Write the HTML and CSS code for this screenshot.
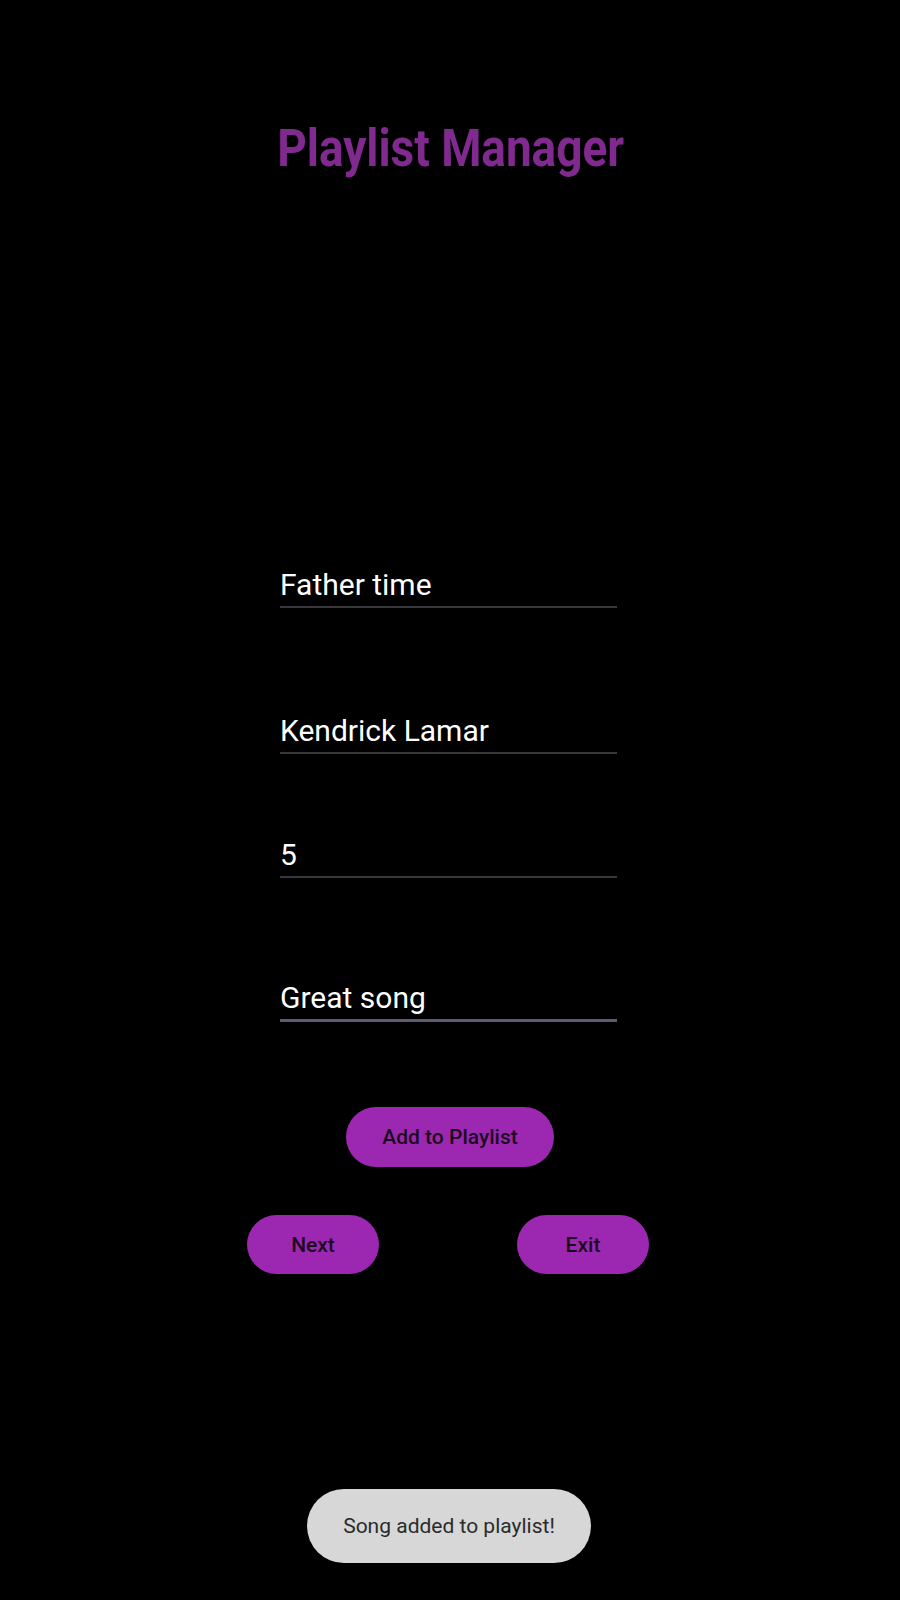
FILE: index.html
```html
<!DOCTYPE html>
<html lang="en">
<head>
<meta charset="utf-8">
<title>Playlist Manager</title>
<link rel="stylesheet" href="styles.css">
</head>
<body>
<main class="screen">
  <h1 class="title"><span class="title-text">Playlist Manager</span></h1>
  <div class="form">
    <div class="field f1"><input class="input" type="text" value="Father time"></div>
    <div class="field f2"><input class="input" type="text" value="Kendrick Lamar"></div>
    <div class="field f3"><input class="input" type="text" value="5"></div>
    <div class="field f4"><input class="input focused" type="text" value="Great song"></div>
  </div>
  <button class="btn btn-add" type="button">Add to Playlist</button>
  <div class="nav-row">
    <button class="btn btn-small" type="button">Next</button>
    <button class="btn btn-small" type="button">Exit</button>
  </div>
  <div class="toast">Song added to playlist!</div>
</main>
</body>
</html>
```

FILE: styles.css
```css
html, body {
  margin: 0;
  padding: 0;
  background: #000;
}
body {
  font-family: Roboto, "Noto Sans", sans-serif;
  color: #fff;
}
.screen {
  position: relative;
  width: 900px;
  height: 1600px;
  display: flex;
  flex-direction: column;
  align-items: center;
}
.title {
  margin: 119px 0 0 0;
  font-size: 51px;
  line-height: 60px;
  font-weight: 700;
  color: #80298e;
  padding-left: 2px;
}
.title-text {
  display: inline-block;
  transform: scaleX(0.9);
}
.form {
  margin-top: 389px;
  display: flex;
  flex-direction: column;
  width: 337px;
  margin-left: -3px;
}
.field {
  display: flex;
}
.f2 { margin-top: 106px; }
.f3 { margin-top: 84px; }
.f4 { margin-top: 104px; }
.input {
  width: 100%;
  box-sizing: border-box;
  background: transparent;
  border: none;
  border-bottom: 2px solid #38383c;
  color: #fff;
  font-family: Roboto, sans-serif;
  font-size: 30px;
  padding: 0 0 6px 0;
  height: 40px;
  outline: none;
}
.input.focused {
  border-bottom: 3px solid #5f5a78;
}
.btn {
  background: #9c27b0;
  color: #1a0a1e;
  border: none;
  font-family: Roboto, sans-serif;
  font-size: 21px;
  font-weight: 500;
  border-radius: 30px;
  height: 60px;
  padding: 0;
}
.btn-add {
  width: 208px;
  margin-top: 85px;
}
.nav-row {
  margin-top: 48px;
  display: flex;
  gap: 138px;
  margin-left: -4px;
}
.btn-small {
  width: 132px;
  height: 59px;
}
.toast {
  position: absolute;
  left: 307px;
  top: 1489px;
  width: 284px;
  height: 74px;
  border-radius: 37px;
  background: #d7d7d7;
  color: #2b2b2b;
  font-size: 21px;
  display: flex;
  align-items: center;
  justify-content: center;
}
```
